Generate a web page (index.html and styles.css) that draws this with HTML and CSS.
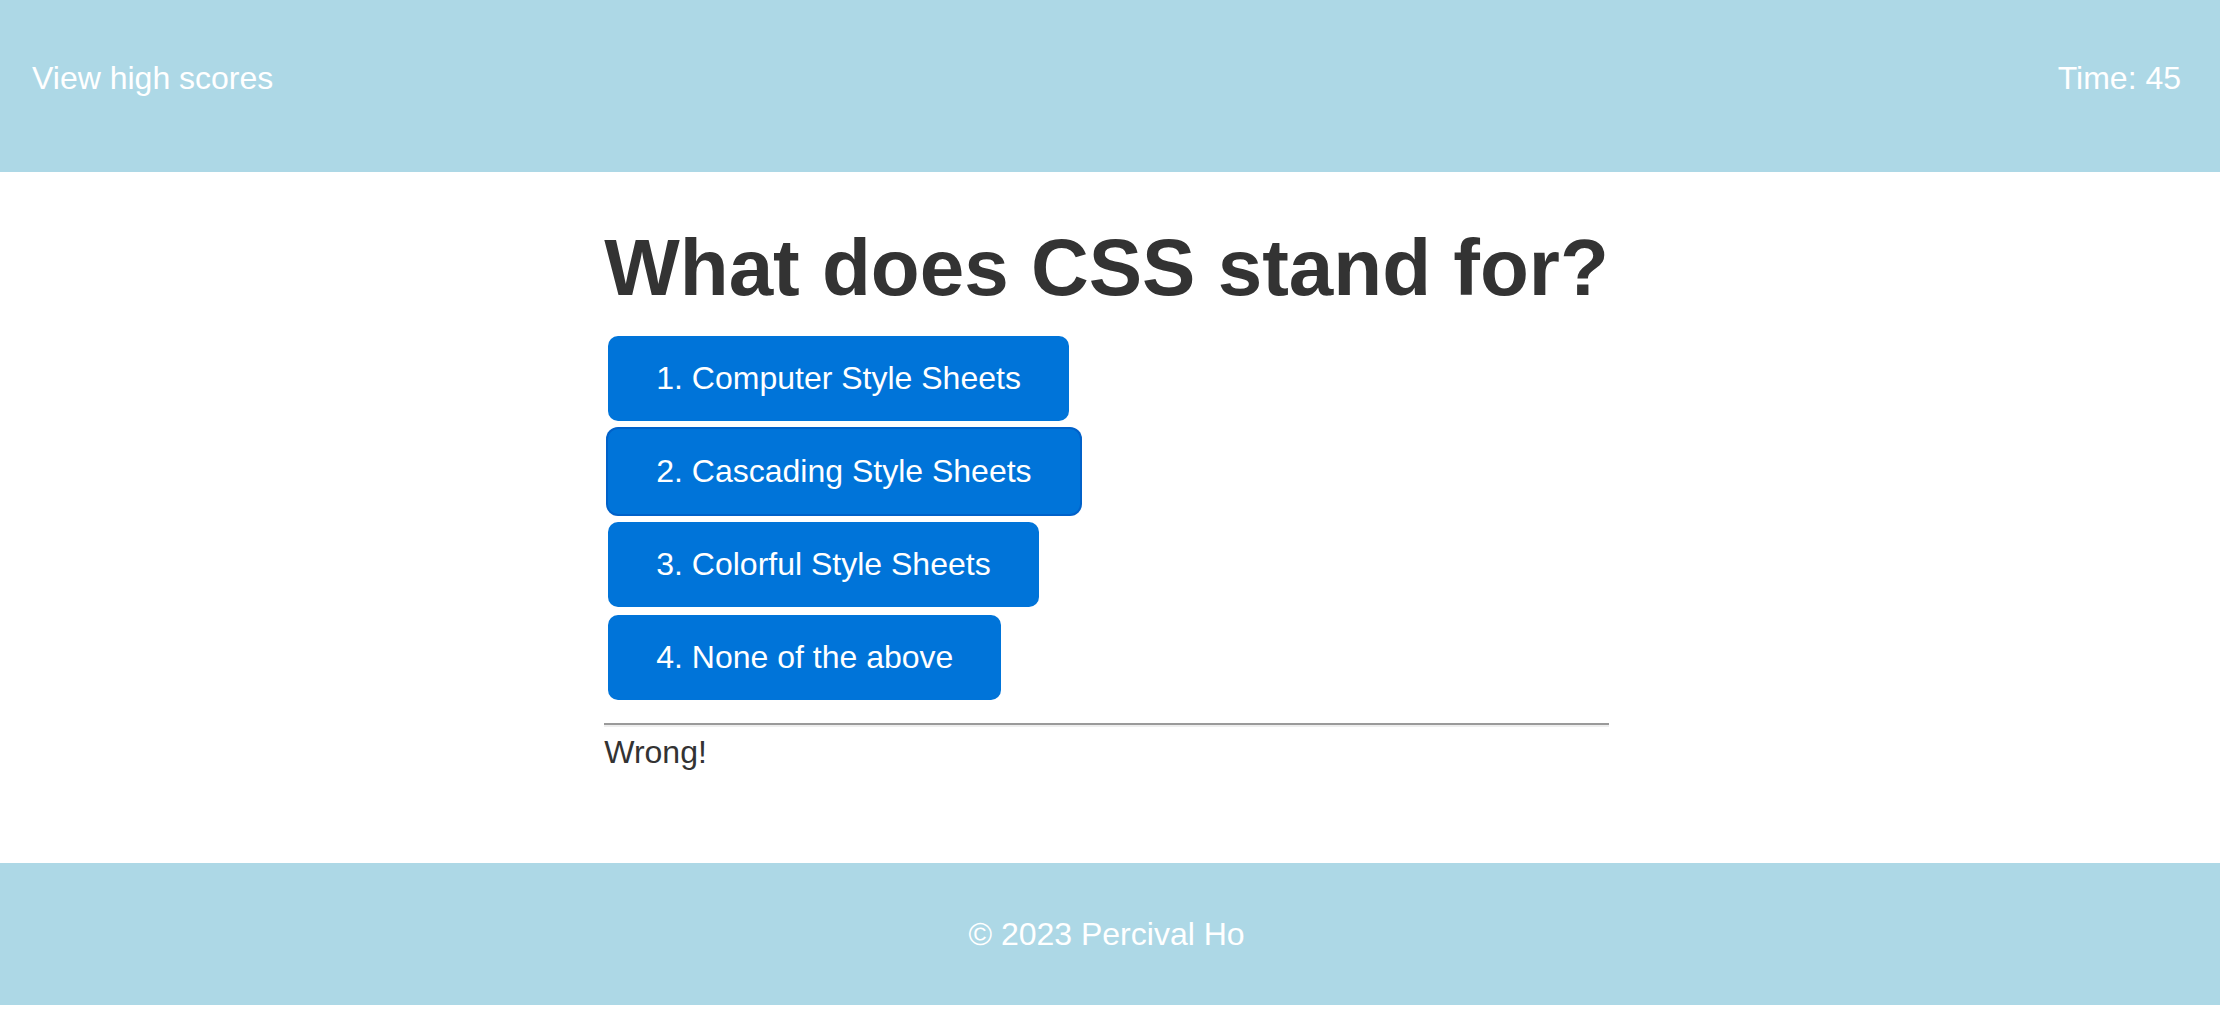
FILE: index.html
```html
<!DOCTYPE html>
<html lang="en">
<head>
<meta charset="utf-8">
<title>Code Quiz</title>
<link rel="stylesheet" href="styles.css">
</head>
<body>
<header class="topbar">
  <a class="highscores" href="#">View high scores</a>
  <div class="timer">Time: 45</div>
</header>
<main class="main">
  <section class="quiz">
    <h1 class="question">What does CSS stand for?</h1>
    <div class="choices">
      <button class="choice">1. Computer Style Sheets</button>
      <button class="choice choice-active">2. Cascading Style Sheets</button>
      <button class="choice">3. Colorful Style Sheets</button>
      <button class="choice">4. None of the above</button>
    </div>
    <hr class="divider">
    <p class="feedback">Wrong!</p>
  </section>
</main>
<footer class="footer">© 2023 Percival Ho</footer>
</body>
</html>
```
FILE: styles.css
```css
* { box-sizing: border-box; }
body {
  margin: 0;
  font-family: "Liberation Sans", Arial, sans-serif;
  color: #333;
  background: #fff;
}
.topbar {
  height: 172px;
  background: #add8e6;
  display: flex;
  justify-content: space-between;
  align-items: flex-start;
  padding: 60px 39px 0 32px;
  font-size: 32px;
  line-height: 37px;
  color: #fff;
}
.highscores {
  color: #fff;
  text-decoration: none;
}
.main {
  padding: 50px 7px 0 0;
  height: 691px;
}
.quiz {
  width: fit-content;
  margin: 0 auto;
}
.question {
  margin: 0 0 22px;
  font-size: 80px;
  line-height: 92px;
  font-weight: bold;
  color: #333;
}
.choices {
  display: flex;
  flex-direction: column;
  align-items: flex-start;
  gap: 8px;
  padding-left: 4px;
}
.choice {
  font-family: "Liberation Sans", Arial, sans-serif;
  font-size: 32px;
  line-height: 37px;
  padding: 24px 48px;
  border: none;
  border-radius: 10px;
  background: #0074d9;
  color: #fff;
  cursor: pointer;
}
.choice-active {
  box-shadow: 0 0 0 2px #0061c9;
}
.divider {
  margin: 23px 0 0;
  border: none;
  border-top: 2px solid #9a9a9a;
  border-bottom: 2px solid #eee;
  height: 4px;
}
.feedback {
  margin: 7px 0 0;
  font-size: 32px;
  line-height: 37px;
  color: #333;
}
.footer {
  height: 142px;
  background: #add8e6;
  color: #fff;
  font-size: 32px;
  line-height: 37px;
  display: flex;
  align-items: center;
  justify-content: center;
  padding-right: 7px;
}
```
